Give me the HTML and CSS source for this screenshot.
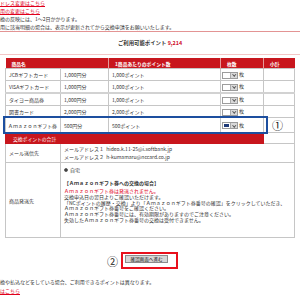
FILE: index.html
```html
<!DOCTYPE html>
<html lang="ja">
<head>
    <meta charset="UTF-8">
    <title>ポイント交換</title>
    <link rel="stylesheet" href="styles.css">
</head>
<body>
    <p class="notes">
        <a href="#">ドレス変更はこちら</a><br>
        <a href="#">用の変更はこちら</a><br>
        換の反映には、1～2日かかります。<br>
        用に該当明細の場合は、表示が更新されてから交換申請をお願いいたします。
    </p>
    <hr class="rule">
    <p class="points">ご利用可能ポイント <span class="num">9,214</span></p>
    <hr class="rule light">

    <div class="order">
        <table class="items">
            <colgroup>
                <col class="c-name">
                <col class="c-price">
                <col class="c-point">
                <col class="c-qty">
                <col class="c-sub">
            </colgroup>
            <tr class="head">
                <th colspan="2">商品名</th>
                <th>1商品あたりのポイント数</th>
                <th>枚数</th>
                <th>小計</th>
            </tr>
            <tr class="item">
                <td>JCBギフトカード</td>
                <td>1,000円分</td>
                <td>1,000ポイント</td>
                <td><span class="qty"><span class="val"></span><span class="arrow"></span></span> 枚</td>
                <td></td>
            </tr>
            <tr class="item sep">
                <td>VISAギフトカード</td>
                <td>1,000円分</td>
                <td>1,000ポイント</td>
                <td><span class="qty"><span class="val"></span><span class="arrow"></span></span> 枚</td>
                <td></td>
            </tr>
            <tr class="item">
                <td>タイヨー商品券</td>
                <td>1,000円分</td>
                <td>1,000ポイント</td>
                <td><span class="qty"><span class="val"></span><span class="arrow"></span></span> 枚</td>
                <td></td>
            </tr>
            <tr class="item">
                <td>図書カード</td>
                <td>2,000円分</td>
                <td>2,000ポイント</td>
                <td><span class="qty"><span class="val"></span><span class="arrow"></span></span> 枚</td>
                <td></td>
            </tr>
            <tr class="item tall">
                <td class="wide">Ａｍａｚｏｎギフト券</td>
                <td>500円分</td>
                <td>500ポイント</td>
                <td><span class="qty active"><span class="val"></span><span class="arrow"></span></span> 枚</td>
                <td></td>
            </tr>
            <tr class="total">
                <td colspan="4">交換ポイントの合計</td>
                <td class="blank"></td>
            </tr>
            <tr class="mail">
                <td>メール送信先</td>
                <td colspan="4">
                    <div>メールアドレス１&nbsp;&nbsp;hideo.k.11-25@i.softbank.jp</div>
                    <div>メールアドレス２&nbsp;&nbsp;h-kumamaru@nccard.co.jp</div>
                </td>
            </tr>
            <tr class="ship">
                <td>商品発送先</td>
                <td colspan="4">
                    <div class="radio-line"><span class="radio"></span>自宅</div>
                    <p class="note-title">【Ａｍａｚｏｎギフト券への交換の場合】</p>
                    <p class="note-red">Ａｍａｚｏｎギフト券は発送されません。</p>
                    <p class="note-body">
                        交換申込日の翌日よりご確認いただけます。<br>
                        「NCポイントの履歴・交換」より「Ａｍａｚｏｎギフト券番号の確認」をクリックしていただき、<br>
                        Ａｍａｚｏｎギフト券番号をご確認ください。<br>
                        Ａｍａｚｏｎギフト券番号には、有効期限がありますのでご注意ください。<br>
                        失効したＡｍａｚｏｎギフト券番号の交換は受付できません。
                    </p>
                </td>
            </tr>
        </table>
        <div class="mark-box"></div>
        <span class="mark-num one">①</span>
    </div>

    <div class="submit">
        <span class="step">②</span>
        <span class="frame"><button type="button">確認画面へ進む</button></span>
    </div>

    <p class="foot">
        換や払込などをしている場合、ご利用できるポイントは異なります。<br>
        <a href="#">はこちら</a>
    </p>
</body>
</html>
```

FILE: styles.css
```css
body {
    margin: 0;
    width: 300px;
    height: 300px;
    overflow: hidden;
    background: #fff;
    color: #333;
    font-family: "Noto Sans CJK JP", "Noto Sans", sans-serif;
    font-size: 5px;
}

a {
    color: #e0001b;
    text-decoration: underline;
}

.notes {
    margin: -1px 0 0;
    line-height: 8px;
    white-space: nowrap;
}

.rule {
    height: 0;
    margin: 0;
    border: 0;
    border-top: 1px solid #e39494;
}

.rule.light {
    border-top-color: #f3c6c6;
}

.points {
    margin: 0;
    height: 22px;
    line-height: 22px;
    text-align: center;
    font-size: 5.4px;
    font-weight: bold;
    color: #333;
}

.points .num {
    color: #d0112b;
}

/* order table */
.order {
    position: relative;
    width: 289px;
    margin: 3px 0 0 5px;
}

.items {
    width: 289px;
    border-collapse: collapse;
    table-layout: fixed;
}

.c-name { width: 55px; }
.c-price { width: 48px; }
.c-point { width: 112px; }
.c-qty { width: 43px; }
.c-sub { width: 31px; }

.items td {
    border: 1px solid #c6c6c6;
    padding: 0 3px;
    white-space: nowrap;
    overflow: hidden;
}

.items td.wide {
    padding: 0 1px 0 2px;
    font-size: 4.9px;
    overflow: visible;
}

.items .head th {
    height: 10px;
    padding: 0 6px;
    background: #c8161d;
    color: #fff;
    font-weight: bold;
    font-size: 4.8px;
    text-align: left;
    border-right: 1px solid #e49a9a;
}

.items .head th:last-child {
    border-right: 0;
}

.item td {
    height: 11px;
}

.item.sep td {
    border-bottom: 2px solid #d2d2d2;
}

.item.tall td {
    height: 14px;
}

.qty {
    display: inline-flex;
    width: 16px;
    height: 7px;
    margin-left: -2px;
    border: 1px solid #9c9c9c;
    box-sizing: border-box;
    vertical-align: middle;
}

.qty .val {
    flex: 1;
    background: #fff;
}

.qty .arrow {
    width: 6px;
    background: #d9d9d9;
    border-left: 1px solid #aaa;
    position: relative;
}

.qty .arrow::after {
    content: "";
    position: absolute;
    left: 1.5px;
    top: 0.5px;
    width: 1.5px;
    height: 1.5px;
    border-right: 1px solid #555;
    border-bottom: 1px solid #555;
    transform: rotate(45deg);
}

.qty.active .val {
    background: #1f3a78;
    margin: 1px;
}

.total td {
    height: 10px;
    padding: 0 7px;
    background: #c8161d;
    color: #fff;
    font-size: 4.8px;
    border-color: #c8161d;
}

.total td.blank {
    background: #fff;
    border-color: #c6c6c6;
}

.mail td {
    height: 18px;
    line-height: 8.5px;
}

.ship td {
    height: 71px;
    vertical-align: middle;
}

.ship td + td {
    vertical-align: top;
    padding-top: 3px;
}

.radio-line {
    display: flex;
    align-items: center;
    gap: 2px;
    height: 7px;
}

.radio {
    width: 4px;
    height: 4px;
    border: 1px solid #666;
    border-radius: 50%;
    box-sizing: border-box;
    background: radial-gradient(circle, #333 0 1px, #fff 1px);
}

.note-title {
    margin: 7px 0 0;
    font-weight: bold;
    line-height: 6px;
}

.note-red {
    margin: 2px 0 0;
    color: #e0001b;
    line-height: 6px;
}

.note-body {
    margin: 0;
    line-height: 5.7px;
}

/* annotations */
.mark-box {
    position: absolute;
    left: -2px;
    top: 58px;
    width: 265px;
    height: 18px;
    border: 2px solid #1d4f9f;
    box-sizing: border-box;
}

.mark-num {
    position: absolute;
    font-size: 11px;
    line-height: 12px;
    color: #111;
}

.mark-num.one {
    left: 267px;
    top: 61px;
}

.submit {
    display: flex;
    align-items: center;
    gap: 3px;
    margin-top: 14px;
    padding-left: 107px;
}

.step {
    font-size: 11px;
    line-height: 12px;
    color: #111;
}

.frame {
    display: inline-block;
    border: 2px solid #e8101c;
    padding: 1px 8px 4px 2px;
}

.frame button {
    display: block;
    width: 43px;
    height: 8px;
    padding: 0;
    font-family: inherit;
    font-size: 4.6px;
    line-height: 6px;
    color: #222;
    background: #d6d6d6;
    border: 1px solid #8c8c8c;
}

.foot {
    margin: 8px 0 0;
    line-height: 9px;
    white-space: nowrap;
}
```
